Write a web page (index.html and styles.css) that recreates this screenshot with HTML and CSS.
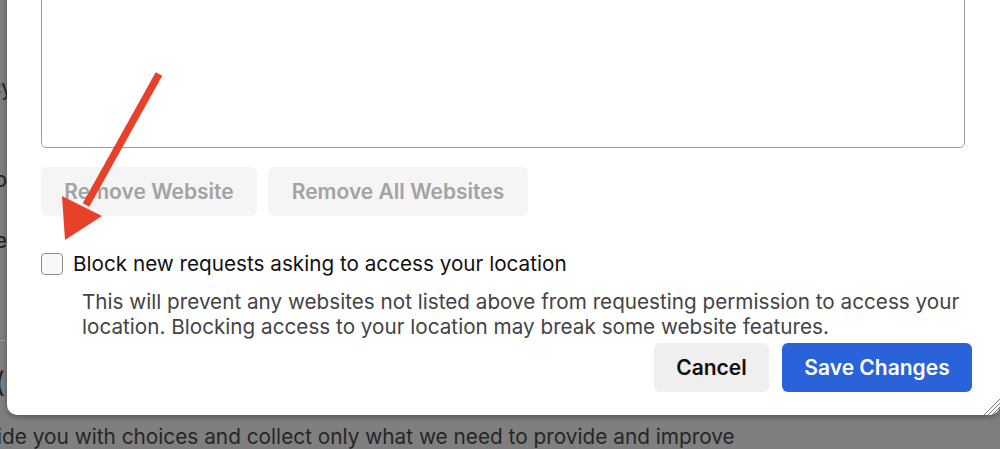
FILE: index.html
```html
<!DOCTYPE html>
<html>
<head>
<meta charset="utf-8">
<link rel="stylesheet" href="styles.css">
</head>
<body>
<div class="page">
  <div class="bg-text">
    <p class="bg-line l1">privacy</p>
    <p class="bg-line l2">to</p>
    <p class="bg-line l3">the</p>
    <div class="bg-rule"></div>
    <p class="bg-line l4">(</p>
    <p class="bg-bottom">ide you with choices and collect only what we need to provide and improve</p>
  </div>

  <div class="dialog">
    <div class="listbox"></div>
    <div class="row-actions">
      <button class="btn btn-disabled">Remove Website</button>
      <button class="btn btn-disabled">Remove All Websites</button>
    </div>
    <label class="check-row">
      <span class="checkbox"></span>
      <span class="check-label">Block new requests asking to access your location</span>
    </label>
    <p class="desc">This will prevent any websites not listed above from requesting permission to access your location. Blocking access to your location may break some website features.</p>
    <div class="footer">
      <button class="btn btn-cancel">Cancel</button>
      <button class="btn btn-primary">Save Changes</button>
    </div>
    <svg class="grip" width="18" height="18" viewBox="0 0 18 18">
      <line x1="2" y1="18" x2="18" y2="2" stroke="#7a7a7a" stroke-width="1"/>
      <line x1="6" y1="18" x2="18" y2="6" stroke="#7a7a7a" stroke-width="1"/>
      <line x1="10" y1="18" x2="18" y2="10" stroke="#7a7a7a" stroke-width="1"/>
      <line x1="14" y1="18" x2="18" y2="14" stroke="#7a7a7a" stroke-width="1"/>
    </svg>
  </div>

  <svg class="arrow" width="200" height="260" viewBox="0 0 200 260">
    <line x1="159" y1="74" x2="86" y2="205" stroke="#e8412a" stroke-width="7.5" stroke-linecap="butt"/>
    <polygon points="65,240 62,196 102,216" fill="#e8412a"/>
  </svg>
</div>
</body>
</html>
```
FILE: styles.css
```css
html, body {
  margin: 0;
  padding: 0;
  width: 1000px;
  height: 449px;
  overflow: hidden;
  background: #7f7f7f;
}

.page {
  position: relative;
  width: 1000px;
  height: 449px;
  overflow: hidden;
  font-family: Inter, "Liberation Sans", Arial, sans-serif;
}

.bg-text {
  color: #222;
  font-size: 21px;
}

.bg-line {
  margin: 0;
  position: absolute;
  left: -60px;
  width: 67px;
  text-align: right;
  line-height: 24px;
}
.l1 { top: 76px; }
.l2 { top: 168px; }
.l3 { top: 229px; }
.l4 { top: 370px; font-size: 28px; left: -62px; }

.bg-rule {
  position: absolute;
  left: 0;
  top: 340px;
  width: 8px;
  height: 1px;
  background: #9a9a9a;
}

.bg-bottom {
  position: absolute;
  margin: 0;
  left: -3px;
  top: 424px;
  line-height: 26px;
  font-size: 20.8px;
  color: #262626;
  white-space: nowrap;
}

.dialog {
  position: absolute;
  left: 7px;
  right: 0;
  top: -120px;
  bottom: 34px;
  background: #fff;
  border-radius: 0 0 10px 10px;
  box-shadow: 0 2px 6px rgba(0,0,0,0.35);
  padding: 0 28px 23px 34px;
  display: flex;
  flex-direction: column;
  box-sizing: border-box;
}

.listbox {
  flex: 1;
  margin-right: 7px;
  border: 1px solid #9c9c9c;
  border-radius: 5px;
}

.row-actions {
  display: flex;
  gap: 11px;
  margin-top: 19px;
}

.btn {
  font-family: Inter, "Liberation Sans", Arial, sans-serif;
  font-weight: 600;
  font-size: 21px;
  border: none;
  border-radius: 6px;
  height: 49px;
  padding: 0;
  cursor: default;
}

.btn-disabled {
  background: #f5f5f5;
  color: #a3a3a3;
}
.row-actions .btn:first-child { width: 216px; }
.row-actions .btn:last-child { width: 260px; }

.check-row {
  display: flex;
  align-items: center;
  gap: 10px;
  margin-top: 36px;
}

.checkbox {
  width: 20px;
  height: 20px;
  border: 1px solid #8c8c8c;
  border-radius: 4px;
  background: #f8f8f8;
  flex: none;
}

.check-label {
  font-size: 20.7px;
  color: #111;
  line-height: 22px;
  padding-top: 1px;
}

.desc {
  margin: 14px 0 0 41px;
  font-size: 20.7px;
  line-height: 25px;
  color: #444;
}

.footer {
  display: flex;
  justify-content: flex-end;
  gap: 13px;
  margin-top: 4px;
}

.btn-cancel {
  width: 115px;
  background: #efefef;
  color: #111;
}

.btn-primary {
  width: 190px;
  background: #2a62d9;
  color: #fff;
}

.grip {
  position: absolute;
  right: 0;
  bottom: 0;
}

.arrow {
  position: absolute;
  left: 0;
  top: 0;
}
```
